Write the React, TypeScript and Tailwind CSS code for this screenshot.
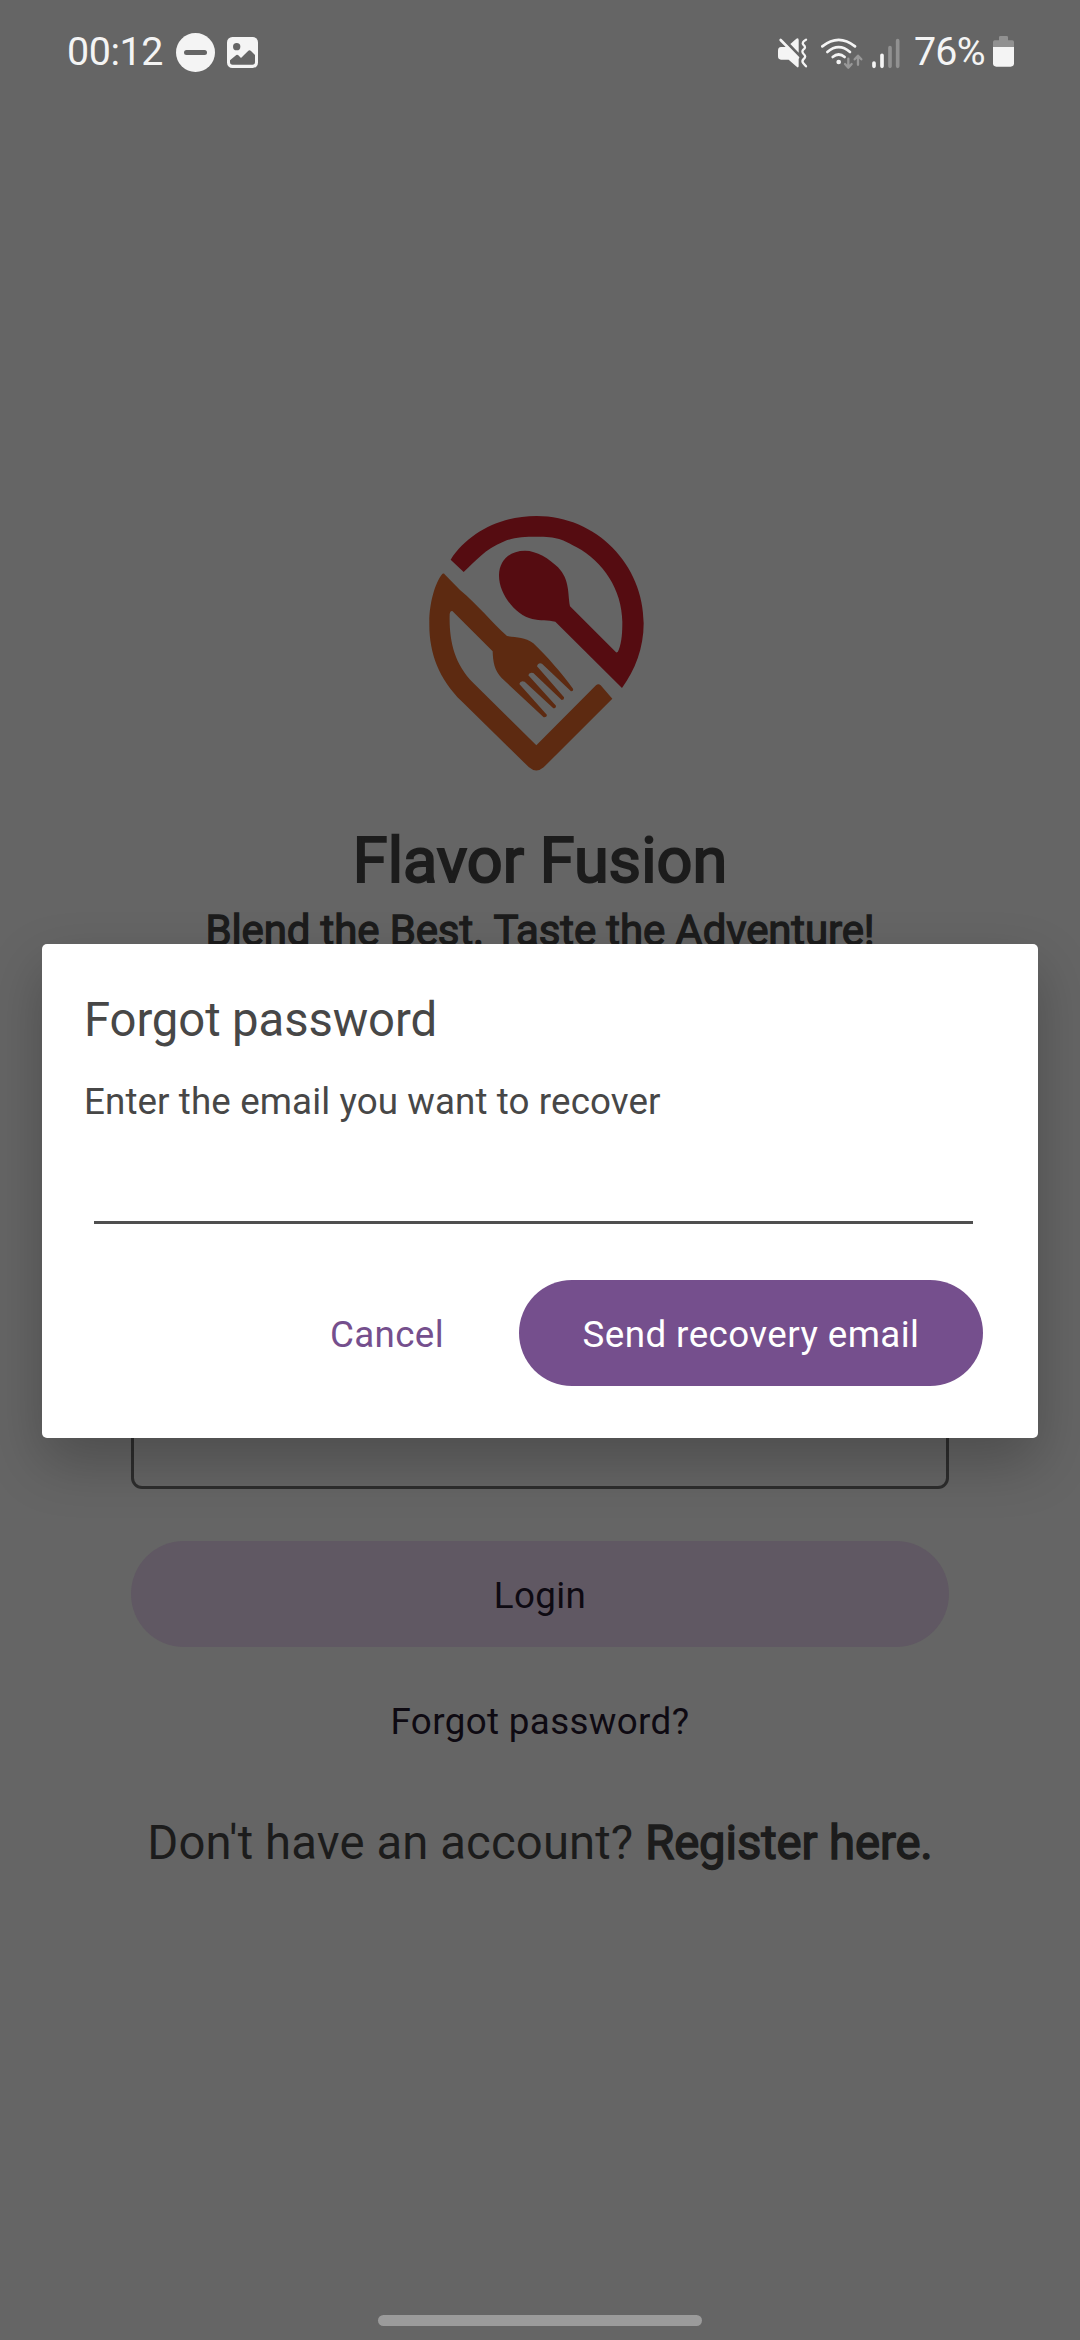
import React from "react";

function StatusBar() {
  return (
    <header className="flex h-[104px] w-full items-start justify-between pl-[67px] pr-[66px] pt-[28px] text-[#f4f4f4]">
      <div className="flex h-[46px] items-start">
        <span className="w-[109px] whitespace-nowrap text-[39.4px] leading-[48px] tracking-[-0.4px]">00:12</span>
        <svg className="mt-[5px] h-[39px] w-[39px]" viewBox="0 0 39 39">
          <circle cx="19.5" cy="19.5" r="19.5" fill="#f4f4f4" />
          <rect x="8" y="17" width="23" height="5" rx="2.5" fill="#656565" />
        </svg>
        <svg className="ml-[12px] mt-[9px] h-[31px] w-[31px]" viewBox="0 0 93 93">
          <rect width="93" height="93" rx="16" fill="#f4f4f4" />
          <circle cx="29" cy="29" r="11" fill="#656565" />
          <path d="M9 70 L28 54 Q31 52 34 55 L42 63 L64 41 Q68 38 72 42 L84 54 V75 Q84 83 76 83 H17 Q9 83 9 75 Z" fill="#656565" />
        </svg>
      </div>
      <div className="flex h-[46px] items-start">
        <svg className="mt-[4px] h-[40px] w-[136px]" viewBox="0 0 408 120">
          <g fill="#f4f4f4">
            <path d="M62 62 V24 Q62 16 55 20 L37 36 Z" />
            <path d="M0 56 Q0 45 9 45 H28 L62 79 V103 Q61 109 56 104 L32 83 H9 Q0 83 0 73 Z" />
          </g>
          <path d="M8 24 L60 77" stroke="#f4f4f4" strokeWidth="8" strokeLinecap="round" fill="none" />
          <path d="M84 23 Q70 31 76 38 Q86 46 76 53 Q70 59 77 66 Q86 74 77 81 Q70 87 76 94 L84 103" fill="none" stroke="#f4f4f4" strokeWidth="7" strokeLinecap="round" strokeLinejoin="round" />
          <g fill="none" stroke="#f4f4f4" strokeWidth="8" strokeLinecap="round">
            <path d="M133 43 Q182 4 231 43" />
            <path d="M148 60 Q182 31 216 60" />
            <path d="M164 75 Q182 60 200 75" />
          </g>
          <circle cx="182" cy="90" r="7" fill="#f4f4f4" />
          <g fill="none" stroke="#989898" strokeWidth="7" strokeLinecap="round" strokeLinejoin="round">
            <path d="M211 80 V106 M201 96 L211 107 L221 96" />
            <path d="M240 98 V72 M230 82 L240 71 L250 82" />
          </g>
          <g strokeWidth="11" strokeLinecap="round">
            <path d="M288 93 V103 M312 70 V103" stroke="#f4f4f4" />
            <path d="M336 47 V103 M359 26 V103" stroke="#919191" />
          </g>
        </svg>
        <span className="w-[79px] whitespace-nowrap text-[39.4px] leading-[48px] tracking-[-0.8px]">76%</span>
        <svg className="mt-[8px] h-[31px] w-[21px]" viewBox="0 0 63 93">
          <path d="M18 4 Q18 0 22 0 H41 Q45 0 45 4 V13 H58 Q63 13 63 18 V33 H0 V18 Q0 13 5 13 H18 Z" fill="#919191" />
          <path d="M0 33 H63 V82 Q63 92 53 92 H10 Q0 92 0 82 Z" fill="#f4f4f4" />
        </svg>
      </div>
    </header>
  );
}

function Logo() {
  return (
    <svg className="mt-[386px] h-[300px] w-[280px] shrink-0" viewBox="0 0 840 900">
      <path
        fill="#550c11"
        d="M152 209 C205 128 300 78 410 78 C590 78 731 225 731 400 C731 475 705 540 666 594 L466 395 C445 390 420 393 397 387 C350 377 296 315 297 255 C298 212 328 182 375 182 C410 182 448 206 474 232 C510 270 503 310 510 349 L648 487 Q654 489 656 480 C666 455 667 425 667 395 C666 300 610 215 530 172 C490 148 470 140 410 140 C370 140 340 142 310 155 C255 177 228 212 191 246 Z"
      />
      <path
        fill="#5d2a11"
        d="M130 249 L180 300 C235 345 275 398 321 438 C350 443 374 440 400 460 C440 498 485 550 519 596 Q521 604 513 604 L426 521 Q414 517 411 529 L492 622 Q493 630 485 630 L400 549 Q387 545 385 556 L468 647 Q468 655 460 655 L374 575 Q361 570 358 582 L441 675 Q440 683 431 682 L305 564 C283 542 279 515 278 484 L157 363 Q150 362 149 373 C147 450 162 520 220 579 L409 766 L588 586 Q595 579 602 586 L637 626 L431 832 Q409 851 387 832 L185 634 C115 566 86 485 88 395 C88 340 105 280 125 254 Q130 247 136 254 Z"
      />
    </svg>
  );
}

function LoginScreen() {
  return (
    <main className="flex flex-col items-center text-[#1c1c1c]">
      <Logo />
      <h1 className="mt-[32px] h-[78px] whitespace-nowrap text-[63px] font-normal leading-[78px] [-webkit-text-stroke:2px_#1c1c1c]">
        Flavor Fusion
      </h1>
      <p className="mt-[5px] h-[52px] whitespace-nowrap text-[42px] leading-[52px] tracking-[-0.13px] [-webkit-text-stroke:1.3px_#1c1c1c]">
        Blend the Best. Taste the Adventure!
      </p>
      <div className="mt-[180px] h-[147px] w-[818px] rounded-[11px] border-[3px] border-[#2d2d2d]" />
      <div className="mt-[58px] h-[147px] w-[818px] rounded-[11px] border-[3px] border-[#2d2d2d]" />
      <button className="mt-[52px] h-[106px] w-[818px] rounded-full bg-[#605863] pt-[3px] text-[36.75px] leading-[44px] tracking-[0.36px] text-[#0e0a12]">
        Login
      </button>
      <button className="mt-[53px] h-[44px] whitespace-nowrap text-[36.75px] leading-[44px] tracking-[0.36px] text-[#0e0a12]">
        Forgot password?
      </button>
      <p className="mt-[71px] h-[56px] whitespace-nowrap text-[47.25px] leading-[56px] tracking-[0.12px]">
        Don't have an account?{" "}
        <span className="tracking-[-0.1px] [-webkit-text-stroke:1.5px_#1c1c1c]">Register here.</span>
      </p>
    </main>
  );
}

function RecoveryDialog() {
  return (
    <div className="absolute inset-0 flex flex-col items-center pt-[944px]">
      <section className="flex h-[494px] w-[996px] flex-col rounded-[5px] bg-white pl-[42px] pr-[55px] pt-[48px] text-[#474747] shadow-[0_24px_56px_rgba(0,0,0,0.24)]">
        <h2 className="h-[56px] whitespace-nowrap text-[47.25px] font-normal leading-[56px] tracking-[-0.1px]">
          Forgot password
        </h2>
        <p className="mt-[32px] h-[44px] whitespace-nowrap text-[36.75px] leading-[44px] tracking-[0.1px]">
          Enter the email you want to recover
        </p>
        <div className="ml-[10px] mt-[49px] h-[51px] w-[879px] border-b-[3px] border-[#4f4f4f]" />
        <div className="mt-[56px] flex h-[106px] items-center justify-end">
          <button className="w-[172px] whitespace-nowrap pt-[3px] text-center text-[36.75px] leading-[44px] tracking-[0.36px] text-[#754f8d]">
            Cancel
          </button>
          <button className="ml-[46px] h-[106px] w-[464px] whitespace-nowrap rounded-full bg-[#754f8d] pt-[3px] text-[36.75px] leading-[44px] tracking-[0.42px] text-white">
            Send recovery email
          </button>
        </div>
      </section>
    </div>
  );
}

export default function App() {
  return (
    <div className="relative flex h-[2340px] w-[1080px] flex-col overflow-hidden bg-[#656565] font-['Roboto',sans-serif]">
      <StatusBar />
      <LoginScreen />
      <div className="mb-[14px] mt-auto h-[11px] w-[324px] self-center rounded-full bg-[#9b9b9b]" />
      <RecoveryDialog />
    </div>
  );
}
